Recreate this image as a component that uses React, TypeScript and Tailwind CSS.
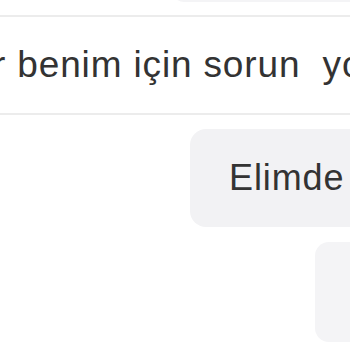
export default function App() {
  return (
    <div className="w-[350px] h-[350px] overflow-hidden bg-white flex flex-col font-['Liberation_Sans',Arial,sans-serif] text-[#333333]">
      {/* previous bubble, only its bottom edge shows */}
      <div className="flex justify-end shrink-0">
        <div className="w-[178px] h-[40px] mt-[-38px] rounded-bl-[12px] bg-[#f4f4f6]" />
      </div>

      {/* input row */}
      <div className="mt-[13px] h-[100px] shrink-0 border-y-2 border-[#ececec] flex items-center overflow-hidden">
        <span className="ml-[-7px] mt-[-2px] whitespace-pre text-[37px] leading-none tracking-[0.85px]">
          {"r benim için sorun  yok"}
        </span>
      </div>

      {/* message bubbles */}
      <div className="flex flex-col items-start pl-[190px] mt-[14px] gap-[15px]">
        <div className="w-[180px] h-[98px] shrink-0 rounded-[16px] bg-[#f2f2f4] flex items-center pl-[39px]">
          <span className="whitespace-pre text-[36px] leading-none tracking-[0.9px]">Elimde</span>
        </div>
        <div className="ml-[125px] w-[60px] h-[100px] shrink-0 rounded-[14px] bg-[#f4f4f6]" />
      </div>
    </div>
  );
}
